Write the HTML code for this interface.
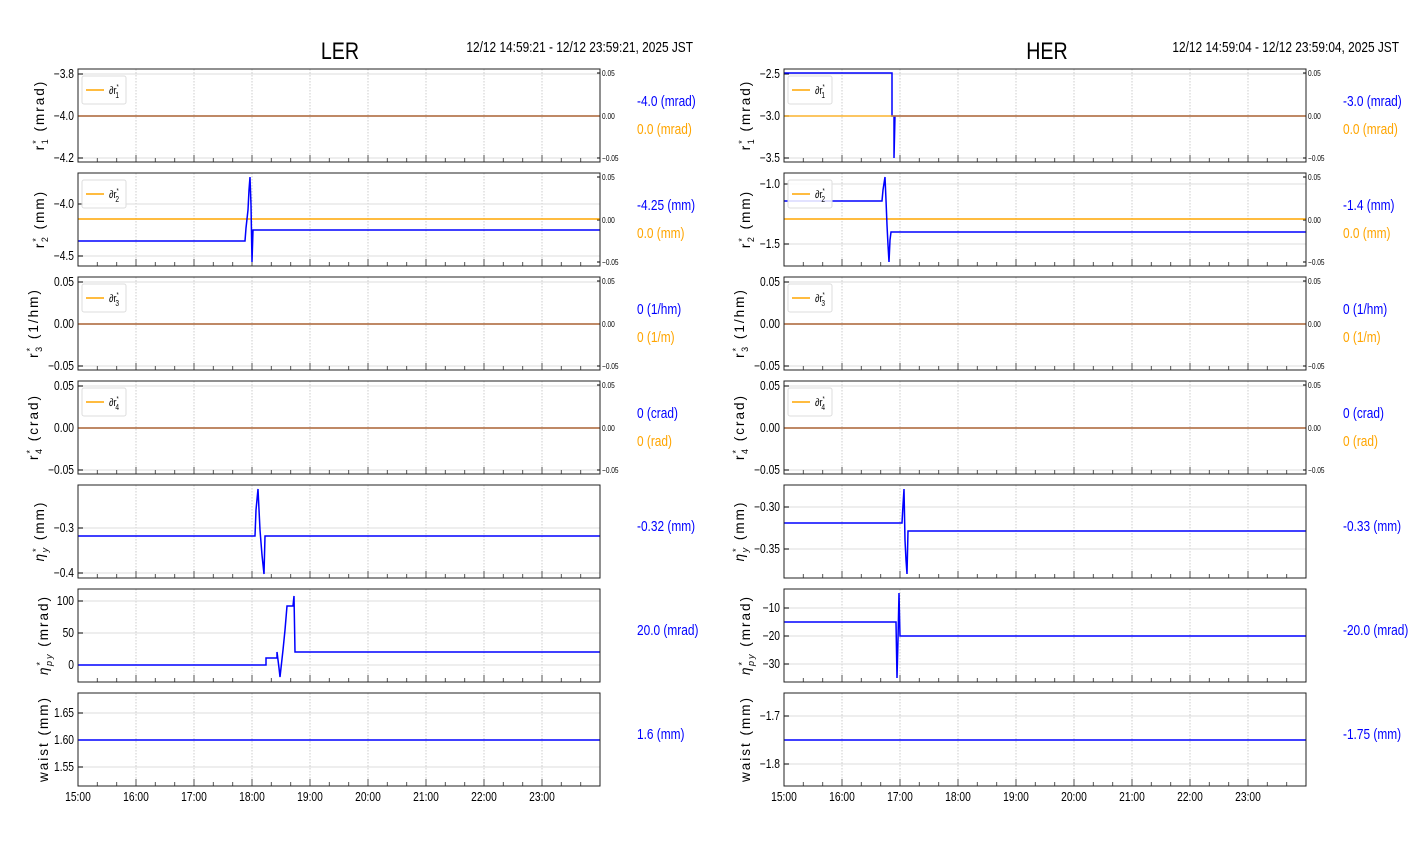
<!DOCTYPE html>
<html><head><meta charset="utf-8">
<style>
html,body{margin:0;padding:0;background:#fff;}
svg{display:block;}
text{font-family:"Liberation Sans",sans-serif;}
.t{font-size:12.5px;fill:#000;}
.s{font-size:8px;fill:#000;}
.yl{font-family:"DejaVu Sans","Liberation Sans",sans-serif;font-size:13.5px;letter-spacing:2px;}
.b{fill:#0000ff;font-size:14.5px;}
.o{fill:#ffa500;font-size:14.5px;}
</style></head>
<body>
<svg id="fig" width="1412" height="864" viewBox="0 0 1412 864" xmlns="http://www.w3.org/2000/svg">
<g id="geo"></g>
<g class="nar">
<text x="340" y="59" text-anchor="middle" style="font-size:24px">LER</text>
<text x="693" y="52" text-anchor="end" style="font-size:14.5px">12/12 14:59:21 - 12/12 23:59:21, 2025 JST</text>
<text x="1047" y="59" text-anchor="middle" style="font-size:24px">HER</text>
<text x="1399" y="52" text-anchor="end" style="font-size:14.5px">12/12 14:59:04 - 12/12 23:59:04, 2025 JST</text>

<g class="t" text-anchor="end">
<text x="74" y="78">−3.8</text><text x="74" y="120">−4.0</text><text x="74" y="162">−4.2</text>
<text x="74" y="208">−4.0</text><text x="74" y="260">−4.5</text>
<text x="74" y="286">0.05</text><text x="74" y="328">0.00</text><text x="74" y="370">−0.05</text>
<text x="74" y="390">0.05</text><text x="74" y="432">0.00</text><text x="74" y="474">−0.05</text>
<text x="74" y="532">−0.3</text><text x="74" y="577">−0.4</text>
<text x="74" y="605">100</text><text x="74" y="637">50</text><text x="74" y="669">0</text>
<text x="74" y="717">1.65</text><text x="74" y="744">1.60</text><text x="74" y="771">1.55</text>
<text x="780" y="78">−2.5</text><text x="780" y="120">−3.0</text><text x="780" y="162">−3.5</text>
<text x="780" y="188">−1.0</text><text x="780" y="248">−1.5</text>
<text x="780" y="286">0.05</text><text x="780" y="328">0.00</text><text x="780" y="370">−0.05</text>
<text x="780" y="390">0.05</text><text x="780" y="432">0.00</text><text x="780" y="474">−0.05</text>
<text x="780" y="511">−0.30</text><text x="780" y="553">−0.35</text>
<text x="780" y="612">−10</text><text x="780" y="640">−20</text><text x="780" y="668">−30</text>
<text x="780" y="720">−1.7</text><text x="780" y="768">−1.8</text>
</g>
<g class="s">
<text x="602" y="76">0.05</text><text x="602" y="119">0.00</text><text x="602" y="161">−0.05</text>
<text x="602" y="180">0.05</text><text x="602" y="223">0.00</text><text x="602" y="265">−0.05</text>
<text x="602" y="284">0.05</text><text x="602" y="327">0.00</text><text x="602" y="369">−0.05</text>
<text x="602" y="388">0.05</text><text x="602" y="431">0.00</text><text x="602" y="473">−0.05</text>
<text x="1308" y="76">0.05</text><text x="1308" y="119">0.00</text><text x="1308" y="161">−0.05</text>
<text x="1308" y="180">0.05</text><text x="1308" y="223">0.00</text><text x="1308" y="265">−0.05</text>
<text x="1308" y="284">0.05</text><text x="1308" y="327">0.00</text><text x="1308" y="369">−0.05</text>
<text x="1308" y="388">0.05</text><text x="1308" y="431">0.00</text><text x="1308" y="473">−0.05</text>
</g>
<g style="font-size:11px">
<text x="109" y="94">∂r<tspan dy="-5" font-size="7">*</tspan><tspan dy="9" dx="-4" font-size="8">1</tspan></text>
<text x="109" y="198">∂r<tspan dy="-5" font-size="7">*</tspan><tspan dy="9" dx="-4" font-size="8">2</tspan></text>
<text x="109" y="302">∂r<tspan dy="-5" font-size="7">*</tspan><tspan dy="9" dx="-4" font-size="8">3</tspan></text>
<text x="109" y="406">∂r<tspan dy="-5" font-size="7">*</tspan><tspan dy="9" dx="-4" font-size="8">4</tspan></text>
<text x="815" y="94">∂r<tspan dy="-5" font-size="7">*</tspan><tspan dy="9" dx="-4" font-size="8">1</tspan></text>
<text x="815" y="198">∂r<tspan dy="-5" font-size="7">*</tspan><tspan dy="9" dx="-4" font-size="8">2</tspan></text>
<text x="815" y="302">∂r<tspan dy="-5" font-size="7">*</tspan><tspan dy="9" dx="-4" font-size="8">3</tspan></text>
<text x="815" y="406">∂r<tspan dy="-5" font-size="7">*</tspan><tspan dy="9" dx="-4" font-size="8">4</tspan></text>
</g>
<text class="b" x="637" y="106">-4.0 (mrad)</text><text class="o" x="637" y="134">0.0 (mrad)</text>
<text class="b" x="637" y="210">-4.25 (mm)</text><text class="o" x="637" y="238">0.0 (mm)</text>
<text class="b" x="637" y="314">0 (1/hm)</text><text class="o" x="637" y="342">0 (1/m)</text>
<text class="b" x="637" y="418">0 (crad)</text><text class="o" x="637" y="446">0 (rad)</text>
<text class="b" x="637" y="531">-0.32 (mm)</text>
<text class="b" x="637" y="635">20.0 (mrad)</text>
<text class="b" x="637" y="739">1.6 (mm)</text>
<text class="b" x="1343" y="106">-3.0 (mrad)</text><text class="o" x="1343" y="134">0.0 (mrad)</text>
<text class="b" x="1343" y="210">-1.4 (mm)</text><text class="o" x="1343" y="238">0.0 (mm)</text>
<text class="b" x="1343" y="314">0 (1/hm)</text><text class="o" x="1343" y="342">0 (1/m)</text>
<text class="b" x="1343" y="418">0 (crad)</text><text class="o" x="1343" y="446">0 (rad)</text>
<text class="b" x="1343" y="531">-0.33 (mm)</text>
<text class="b" x="1343" y="635">-20.0 (mrad)</text>
<text class="b" x="1343" y="739">-1.75 (mm)</text>
<g class="t" text-anchor="middle">
<text x="78" y="801">15:00</text><text x="136" y="801">16:00</text><text x="194" y="801">17:00</text><text x="252" y="801">18:00</text><text x="310" y="801">19:00</text><text x="368" y="801">20:00</text><text x="426" y="801">21:00</text><text x="484" y="801">22:00</text><text x="542" y="801">23:00</text>
<text x="784" y="801">15:00</text><text x="842" y="801">16:00</text><text x="900" y="801">17:00</text><text x="958" y="801">18:00</text><text x="1016" y="801">19:00</text><text x="1074" y="801">20:00</text><text x="1132" y="801">21:00</text><text x="1190" y="801">22:00</text><text x="1248" y="801">23:00</text>
</g>
</g>
<g class="yl" text-anchor="middle">
<text transform="translate(44,115) rotate(-90)">r<tspan dy="-5" font-size="9">*</tspan><tspan dy="9" dx="-6" font-size="9">1</tspan><tspan dy="-4"> (mrad)</tspan></text>
<text transform="translate(44,219) rotate(-90)">r<tspan dy="-5" font-size="9">*</tspan><tspan dy="9" dx="-6" font-size="9">2</tspan><tspan dy="-4"> (mm)</tspan></text>
<text transform="translate(38,323) rotate(-90)">r<tspan dy="-5" font-size="9">*</tspan><tspan dy="9" dx="-6" font-size="9">3</tspan><tspan dy="-4"> (1/hm)</tspan></text>
<text transform="translate(38,427) rotate(-90)">r<tspan dy="-5" font-size="9">*</tspan><tspan dy="9" dx="-6" font-size="9">4</tspan><tspan dy="-4"> (crad)</tspan></text>
<text transform="translate(44,531) rotate(-90)"><tspan font-style="italic">η</tspan><tspan dy="-5" font-size="9">*</tspan><tspan dy="9" dx="-6" font-size="9" font-style="italic">y</tspan><tspan dy="-4"> (mm)</tspan></text>
<text transform="translate(48,635) rotate(-90)"><tspan font-style="italic">η</tspan><tspan dy="-5" font-size="9">*</tspan><tspan dy="9" dx="-6" font-size="9" font-style="italic">py</tspan><tspan dy="-4"> (mrad)</tspan></text>
<text transform="translate(48,739) rotate(-90)">waist (mm)</text>
<text transform="translate(750,115) rotate(-90)">r<tspan dy="-5" font-size="9">*</tspan><tspan dy="9" dx="-6" font-size="9">1</tspan><tspan dy="-4"> (mrad)</tspan></text>
<text transform="translate(750,219) rotate(-90)">r<tspan dy="-5" font-size="9">*</tspan><tspan dy="9" dx="-6" font-size="9">2</tspan><tspan dy="-4"> (mm)</tspan></text>
<text transform="translate(744,323) rotate(-90)">r<tspan dy="-5" font-size="9">*</tspan><tspan dy="9" dx="-6" font-size="9">3</tspan><tspan dy="-4"> (1/hm)</tspan></text>
<text transform="translate(744,427) rotate(-90)">r<tspan dy="-5" font-size="9">*</tspan><tspan dy="9" dx="-6" font-size="9">4</tspan><tspan dy="-4"> (crad)</tspan></text>
<text transform="translate(744,531) rotate(-90)"><tspan font-style="italic">η</tspan><tspan dy="-5" font-size="9">*</tspan><tspan dy="9" dx="-6" font-size="9" font-style="italic">y</tspan><tspan dy="-4"> (mm)</tspan></text>
<text transform="translate(750,635) rotate(-90)"><tspan font-style="italic">η</tspan><tspan dy="-5" font-size="9">*</tspan><tspan dy="9" dx="-6" font-size="9" font-style="italic">py</tspan><tspan dy="-4"> (mrad)</tspan></text>
<text transform="translate(750,739) rotate(-90)">waist (mm)</text>
</g>
</svg>
<script>
(function(){
var g=document.getElementById('geo'),h='';
var tops=[69,173,277,381,485,589,693],H=93;
var yt={L:[[74,116,158],[204,256],[282,324,366],[386,428,470],[528,573],[601,633,665],[713,740,767]],
        R:[[74,116,158],[184,244],[282,324,366],[386,428,470],[507,549],[608,636,664],[716,764]]};
[['L',78],['R',784]].forEach(function(p){
 var x0=p[1],x1=x0+522;
 for(var r=0;r<7;r++){
  var t=tops[r],b=t+H;
  for(var k=1;k<9;k++){var x=x0+k*58;h+='<line x1="'+x+'" y1="'+t+'" x2="'+x+'" y2="'+b+'" stroke="#ccc" stroke-dasharray="1.5,1.5" stroke-width="1"/>';}
  yt[p[0]][r].forEach(function(y){h+='<line x1="'+x0+'" y1="'+y+'" x2="'+x1+'" y2="'+y+'" stroke="#ddd" stroke-width="1"/>';h+='<line x1="'+x0+'" y1="'+y+'" x2="'+(x0+5)+'" y2="'+y+'" stroke="#000"/>';});
  for(var k=0;k<27;k++){var x=x0+k*58/3,len=(k%3==0)?7:4;h+='<line x1="'+x+'" y1="'+b+'" x2="'+x+'" y2="'+(b-len)+'" stroke="#555"/>';}
  if(r<4){[t+4,t+47,t+89].forEach(function(y){h+='<line x1="'+x1+'" y1="'+y+'" x2="'+(x1-3)+'" y2="'+y+'" stroke="#000"/>';});}
 }
});
function pl(pts,c,w,op){h+='<polyline points="'+pts+'" fill="none" stroke="'+c+'" stroke-width="'+(w||1.5)+'" '+(op?'stroke-opacity="'+op+'"':'')+'/>';}
pl('78,116 600,116','#0000ff');pl('78,116 600,116','#ffa500',1.5,0.8);
pl('78,219 600,219','#ffa500');
pl('78,241 245,241 246,228 248,210 249,190 250,177 251,205 252,262 253,230 600,230','#0000ff');
pl('78,324 600,324','#0000ff');pl('78,324 600,324','#ffa500',1.5,0.8);
pl('78,428 600,428','#0000ff');pl('78,428 600,428','#ffa500',1.5,0.8);
pl('78,536 255,536 256,510 258,489 260,530 262,555 264,574 265,536 600,536','#0000ff');
pl('78,665 266,665 266,658 277,658 277,652 279,668 280,677 283,650 285,630 287,606 288,606 288,606 293,606 294,596 295,652 600,652','#0000ff');
pl('78,740 600,740','#0000ff');
pl('784,73 892,73 892,116 894,116 894,158 895,116 1306,116','#0000ff');pl('784,116 1306,116','#ffa500',1.5,0.8);
pl('784,219 1306,219','#ffa500');
pl('784,201 882,201 883,190 885,177 886,200 887,225 888,245 889,262 890,240 891,232 1306,232','#0000ff');
pl('784,324 1306,324','#0000ff');pl('784,324 1306,324','#ffa500',1.5,0.8);
pl('784,428 1306,428','#0000ff');pl('784,428 1306,428','#ffa500',1.5,0.8);
pl('784,523 902,523 903,505 904,489 905,540 906,560 907,574 908,531 1306,531','#0000ff');
pl('784,622 896,622 897,678 898,640 899,593 900,636 1306,636','#0000ff');
pl('784,740 1306,740','#0000ff');
[78,784].forEach(function(x0){
 tops.forEach(function(t){h+='<rect x="'+x0+'" y="'+t+'" width="522" height="'+H+'" fill="none" stroke="#222" stroke-width="1"/>';});
 for(var r=0;r<4;r++){var t=tops[r];h+='<rect x="'+(x0+4)+'" y="'+(t+7)+'" width="44" height="28" rx="2" fill="#fff" fill-opacity="0.85" stroke="#ddd"/>';h+='<line x1="'+(x0+8)+'" y1="'+(t+21)+'" x2="'+(x0+26)+'" y2="'+(t+21)+'" stroke="#ffa500" stroke-width="1.5"/>';}
});
g.innerHTML=h;
var ts=document.querySelectorAll('.nar text');
for(var i=0;i<ts.length;i++){var x=ts[i].getAttribute('x');ts[i].setAttribute('transform','translate('+x+',0) scale(0.82,1) translate('+(-x)+',0)');}
})();
</script>
</body></html>
